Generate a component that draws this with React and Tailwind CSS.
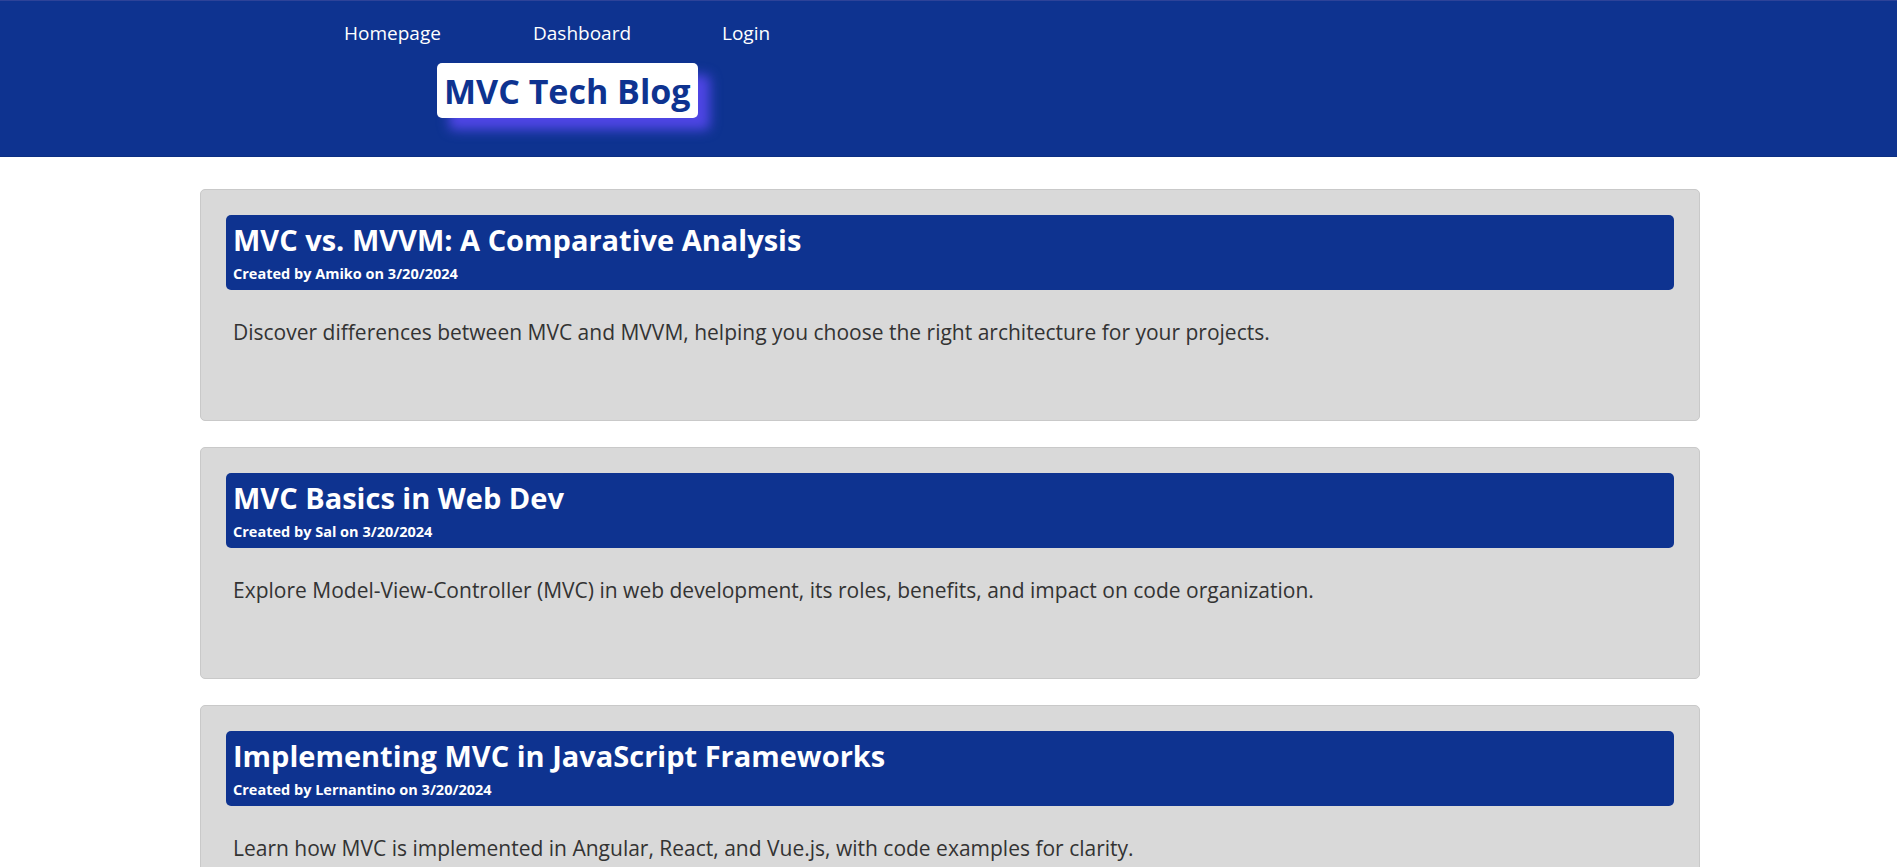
const posts = [
  {
    title: "MVC vs. MVVM: A Comparative Analysis",
    author: "Amiko",
    date: "3/20/2024",
    body: "Discover differences between MVC and MVVM, helping you choose the right architecture for your projects.",
  },
  {
    title: "MVC Basics in Web Dev",
    author: "Sal",
    date: "3/20/2024",
    body: "Explore Model-View-Controller (MVC) in web development, its roles, benefits, and impact on code organization.",
  },
  {
    title: "Implementing MVC in JavaScript Frameworks",
    author: "Lernantino",
    date: "3/20/2024",
    body: "Learn how MVC is implemented in Angular, React, and Vue.js, with code examples for clarity.",
  },
];

export default function App() {
  return (
    <div className="min-h-screen bg-white font-['Open_Sans','Noto_Sans',sans-serif]">
      <header className="h-[157px] bg-[#0e3390] border-t border-t-[#2d4399] border-b border-b-[#0c2f82]">
        <nav className="flex pl-[344px] pt-[18px]">
          {["Homepage", "Dashboard", "Login"].map((l) => (
            <a key={l} href="#" className="w-[189px] text-[19px] leading-[28px] text-white">
              {l}
            </a>
          ))}
        </nav>
        <div className="ml-[437px] mt-[16px] inline-flex h-[55px] items-center rounded-[5px] bg-white px-[7px] shadow-[12px_12px_12px_#4f46e5]">
          <h1 className="text-[34px] font-bold leading-none text-[#0e3390]">MVC Tech Blog</h1>
        </div>
      </header>
      <main className="flex flex-col gap-[26px] pt-[32px]">
        {posts.map((p) => (
          <article
            key={p.title}
            className="ml-[200px] h-[232px] w-[1500px] rounded-[5px] border border-[#c9c9c9] bg-[#d9d9d9] px-[25px] pt-[25px]"
          >
            <div className="h-[75px] rounded-[5px] bg-[#0e3390] px-[7px] pt-[5px] text-white">
              <h2 className="text-[29px] font-bold leading-[40px]">{p.title}</h2>
              <p className="mt-[4px] text-[14.5px] font-bold leading-[20px]">
                Created by {p.author} on {p.date}
              </p>
            </div>
            <p className="mt-[28px] px-[7px] text-[21px] leading-[28px] text-[#333333]">{p.body}</p>
          </article>
        ))}
      </main>
    </div>
  );
}
